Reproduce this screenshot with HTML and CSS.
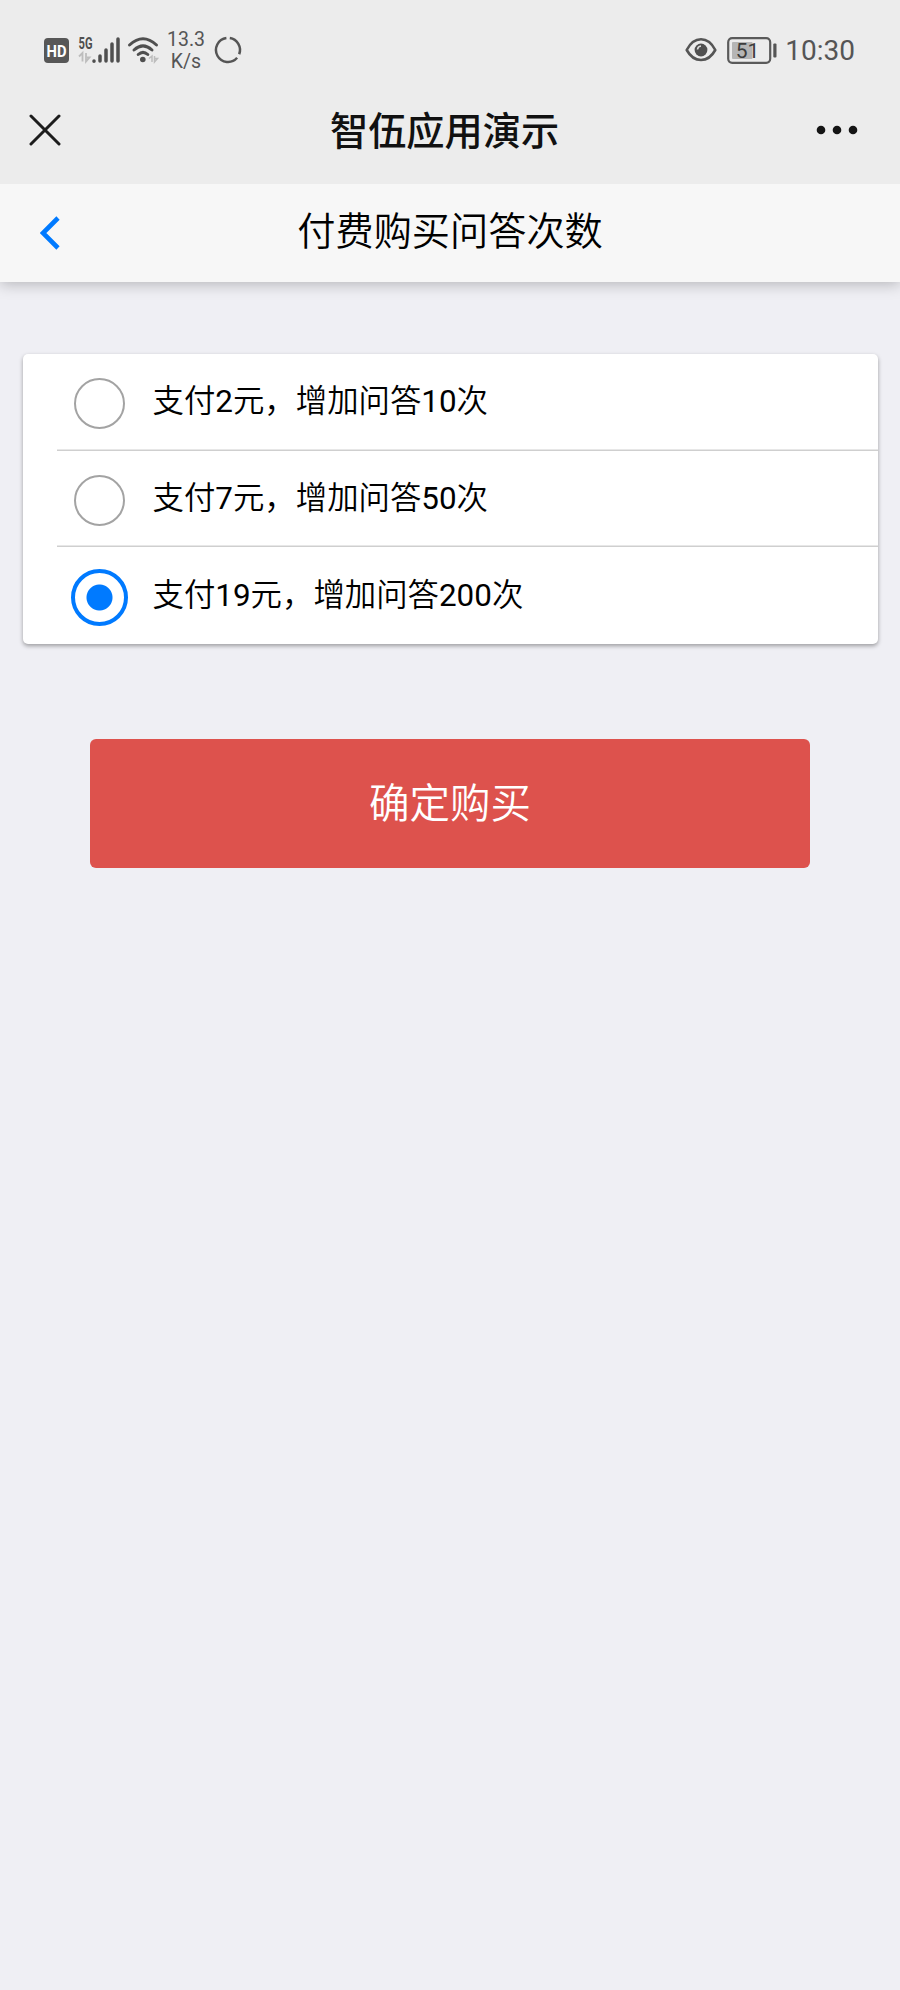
FILE: index.html
```html
<!DOCTYPE html>
<html lang="zh-CN">
<head>
    <meta charset="UTF-8">
    <meta name="viewport" content="width=device-width, initial-scale=1.0">
    <title>付费购买问答次数</title>
    <link rel="stylesheet" href="styles.css">
</head>
<body>
    <div class="status-bar">
        <svg class="icon-hd" width="25" height="25" viewBox="0 0 25 25">
            <rect width="25" height="25" rx="4" fill="#575757"/>
            <text x="12.5" y="18.6" text-anchor="middle" textLength="20" lengthAdjust="spacingAndGlyphs">HD</text>
        </svg>
        <svg class="icon-signal" width="44" height="28" viewBox="0 0 44 28">
            <text x="0.5" y="12.5" textLength="14" lengthAdjust="spacingAndGlyphs">5G</text>
            <path d="M1 20.5L4.5 17V25.5M8 17V25.5L11.5 21.5H9" fill="none" stroke="#bdbdbd" stroke-width="1.8"/>
            <path d="M16 25V25.2M22 20V25M28 14V25M34 8V25M40 3V25" stroke="#4f4f4f" stroke-width="3.5" stroke-linecap="round"/>
        </svg>
        <svg class="icon-wifi" width="34" height="28" viewBox="0 0 34 28">
            <path d="M2.5 9Q16 -3.5 29.5 9M7 14Q16 5.8 25 14M11.2 18.5Q16 14.2 20.8 18.5" fill="none" stroke="#4f4f4f" stroke-width="3" stroke-linecap="round"/>
            <circle cx="15.8" cy="23.5" r="2.8" fill="#4f4f4f"/>
            <path d="M22 22.5L25 20V26M27.5 20V26L30.5 22.5H28" fill="none" stroke="#bdbdbd" stroke-width="1.5"/>
        </svg>
        <div class="speed">13.3<br>K/s</div>
        <svg class="icon-ring" width="28" height="28" viewBox="0 0 28 28">
            <path d="M15.8 2.1A12 12 0 0 1 25.2 18.2M23.1 21.8A12 12 0 1 1 12.4 2.1" fill="none" stroke="#555" stroke-width="2.5"/>
        </svg>
        <div class="status-right">
            <svg width="32" height="26" viewBox="0 0 32 26">
                <path d="M1.7 13C9 -1.3 23 -1.3 30.3 13C23 26.3 9 26.3 1.7 13Z" fill="none" stroke="#555" stroke-width="2.6" stroke-linejoin="round"/>
                <circle cx="16" cy="13" r="6.4" fill="#505050"/>
                <path d="M12.5 12.5A4 4 0 0 1 16 9" fill="none" stroke="#ddd" stroke-width="1.6"/>
            </svg>
            <svg class="icon-battery" width="50" height="27" viewBox="0 0 50 27">
                <rect x="1.2" y="1.2" width="42" height="24.6" rx="4" fill="none" stroke="#5a5a5a" stroke-width="2.2"/>
                <rect x="5" y="5" width="20.5" height="17" rx="1" fill="#b5b5b5"/>
                <rect x="46.3" y="6.5" width="3.2" height="14" rx="1" fill="#555"/>
                <text x="20.5" y="20.5" text-anchor="middle">51</text>
            </svg>
            <span class="time">10:30</span>
        </div>
    </div>

    <div class="title-bar">
        <svg width="32" height="32" viewBox="0 0 32 32">
            <path d="M2 2L30 30M30 2L2 30" stroke="#1c1c1c" stroke-width="3" stroke-linecap="round"/>
        </svg>
        <h1>智伍应用演示</h1>
        <svg width="42" height="10" viewBox="0 0 42 10" fill="#141414">
            <circle cx="5" cy="5" r="4.3"/>
            <circle cx="21" cy="5" r="4.3"/>
            <circle cx="37" cy="5" r="4.3"/>
        </svg>
    </div>

    <div class="nav-bar">
        <svg width="20" height="34" viewBox="0 0 20 34">
            <path d="M18 2L3 17L18 32" fill="none" stroke="#007aff" stroke-width="4.6"/>
        </svg>
        <h2>付费购买问答次数</h2>
    </div>

    <div class="card">
        <label class="option">
            <input type="radio" name="plan" value="10">
            <span>支付<b>2</b>元，增加问答<b>10</b>次</span>
        </label>
        <label class="option">
            <input type="radio" name="plan" value="50">
            <span>支付<b>7</b>元，增加问答<b>50</b>次</span>
        </label>
        <label class="option">
            <input type="radio" name="plan" value="200" checked>
            <span>支付<b>19</b>元，增加问答<b>200</b>次</span>
        </label>
    </div>

    <button class="buy">确定购买</button>
</body>
</html>
```

FILE: styles.css
```css
* {
    box-sizing: border-box;
}

body {
    margin: 0;
    min-height: 1990px;
    background-color: #efeff4;
    font-family: Roboto, "Noto Sans CJK SC", sans-serif;
    font-weight: 350;
    color: #000;
}

h1, h2 {
    margin: 0;
    flex: 1;
    text-align: center;
}

.status-bar {
    display: flex;
    align-items: center;
    height: 100px;
    padding: 0 45px 0 44px;
    background-color: #ececec;
    color: #555;
    font-weight: 400;
}

.status-bar svg {
    overflow: visible;
}

.icon-hd text {
    font-size: 17px;
    font-weight: 700;
    fill: #fff;
}

.icon-signal {
    margin-left: 9px;
}

.icon-signal text {
    font-size: 16px;
    font-weight: 700;
    fill: #4f4f4f;
}

.icon-wifi {
    margin-left: 5px;
}

.speed {
    width: 40px;
    margin-left: 5px;
    padding-top: 2px;
    font-size: 19.5px;
    line-height: 22px;
    text-align: center;
}

.icon-ring {
    margin-left: 8px;
}

.status-right {
    display: flex;
    align-items: center;
    margin-left: auto;
}

.icon-battery {
    margin-left: 10px;
}

.icon-battery text {
    font-size: 21px;
    fill: #3c3c3c;
}

.time {
    margin-left: 8px;
    font-size: 28px;
}

.title-bar {
    position: relative;
    z-index: 1;
    display: flex;
    align-items: center;
    height: 84px;
    padding: 0 42px 24px 29px;
    background-color: #ececec;
}

.title-bar h1 {
    padding-top: 4px;
    padding-left: 12px;
    font-size: 38.2px;
    line-height: 56px;
    font-weight: 500;
    color: #111;
}

.nav-bar {
    display: flex;
    align-items: center;
    height: 98px;
    padding: 0 60px 0 40px;
    background-color: #f7f7f7;
    box-shadow: 0 2px 14px rgba(0, 0, 0, 0.25);
}

.nav-bar h2 {
    padding-bottom: 2px;
    font-size: 38.2px;
    line-height: 56px;
    font-weight: 350;
}

.card {
    margin: 72px 22.5px 0;
    background-color: #fff;
    border-radius: 5px;
    box-shadow: 0 2px 4px rgba(0, 0, 0, 0.35);
}

.option {
    display: flex;
    align-items: center;
    height: 96.7px;
    margin-left: 34.5px;
    box-shadow: inset 0 -1.5px 0 #cfcfcf;
    font-size: 31.4px;
    line-height: 46px;
}

.option:last-child {
    box-shadow: none;
}

.option b {
    font-weight: 400;
}

.option input {
    appearance: none;
    width: 51px;
    height: 51px;
    margin: 3px 28px 0 16.5px;
    border: 2px solid #a3a3a3;
    border-radius: 50%;
}

.option input:checked {
    width: 57px;
    height: 57px;
    margin: 3px 25px 0 13.5px;
    border: 4px solid #007aff;
    background: radial-gradient(circle, #007aff 12.5px, #fff 13.5px);
}

.buy {
    display: block;
    width: 720px;
    height: 129px;
    margin: 95px auto 0;
    padding: 0 0 6px;
    border: 0;
    border-radius: 6px;
    background-color: #dd524d;
    color: #fff;
    font-family: inherit;
    font-size: 40.5px;
    font-weight: 350;
}
```
